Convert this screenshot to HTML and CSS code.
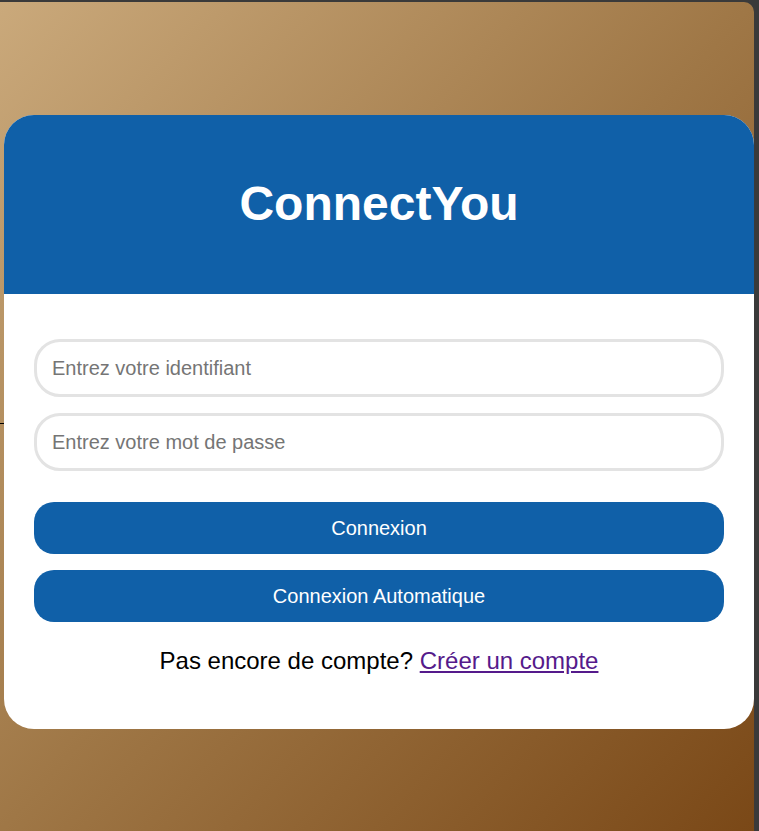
FILE: index.html
```html
<!DOCTYPE html>
<html lang="fr">
<head>
<meta charset="utf-8">
<title>ConnectYou</title>
<link rel="stylesheet" href="styles.css">
</head>
<body>
<div class="frame">
  <span class="tick"></span>
  <div class="card">
    <div class="card-header">
      <h1 class="title">ConnectYou</h1>
    </div>
    <form class="card-body">
      <input class="field" type="text" placeholder="Entrez votre identifiant">
      <input class="field" type="password" placeholder="Entrez votre mot de passe">
      <div class="actions">
        <button class="btn" type="button">Connexion</button>
        <button class="btn" type="button">Connexion Automatique</button>
      </div>
      <p class="signup">Pas encore de compte? <a class="link" href="#">Créer un compte</a></p>
    </form>
  </div>
</div>
</body>
</html>
```
FILE: styles.css
```css
html, body {
  margin: 0;
  padding: 0;
  height: 100%;
}
body {
  background: #3a3a3a;
  overflow: hidden;
  font-family: "Liberation Sans", Arial, sans-serif;
}
.frame {
  position: relative;
  margin-top: 2px;
  width: 754px;
  height: 829px;
  border-top-right-radius: 10px;
  background: linear-gradient(to bottom right, #caa97b 0%, #9f7746 50%, #7a4817 100%);
  overflow: hidden;
  padding-top: 113px;
  padding-left: 4px;
  box-sizing: border-box;
}
.tick {
  position: absolute;
  left: 0;
  top: 421px;
  width: 4px;
  height: 1px;
  background: #000;
}
.card {
  width: 750px;
  background: #fff;
  border-radius: 30px;
  overflow: hidden;
}
.card-header {
  background: #1060a8;
  height: 179px;
  display: flex;
  align-items: center;
  justify-content: center;
}
.title {
  margin: 0 0 3px;
  color: #fff;
  font-size: 48px;
  font-weight: bold;
}
.card-body {
  padding: 45px 30px 54px;
  display: flex;
  flex-direction: column;
  gap: 16px;
}
.field {
  height: 58px;
  box-sizing: border-box;
  border: 3px solid #e3e3e3;
  border-radius: 26px;
  padding: 0 15px;
  font-family: "Liberation Sans", Arial, sans-serif;
  font-size: 20px;
  color: #333;
  outline: none;
}
.field::placeholder {
  color: #757575;
}
.actions {
  margin-top: 15px;
  display: flex;
  flex-direction: column;
  gap: 16px;
}
.btn {
  height: 52px;
  border: none;
  border-radius: 20px;
  background: #1060a8;
  color: #fff;
  font-family: "Liberation Sans", Arial, sans-serif;
  font-size: 20px;
  cursor: pointer;
}
.signup {
  margin: 9px 0 0;
  text-align: center;
  font-size: 24px;
  color: #000;
  line-height: 28px;
}
.link {
  color: #551a8b;
}
```
